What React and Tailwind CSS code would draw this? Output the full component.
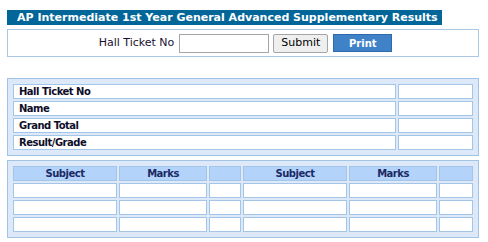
import React from "react";

const font = { fontFamily: '"DejaVu Sans", Verdana, sans-serif' };

function Cell({ children, className = "" }) {
  return (
    <div className={`h-[15px] border border-[#a3c6e8] bg-white ${className}`}>{children}</div>
  );
}

function Head({ children }) {
  return (
    <div className="h-[15px] border border-[#a3c6e8] bg-[#b3d3fb] flex items-center justify-center text-[10px] tracking-[-0.5px] font-bold leading-none text-[#1b2a64]">
      {children}
    </div>
  );
}

export default function App() {
  const labels = ["Hall Ticket No", "Name", "Grand Total", "Result/Grade"];
  return (
    <div className="w-[488px] h-[242px] bg-white" style={font}>
      <div className="ml-[7px] pt-[10px] w-[472px] flex flex-col">
        <div className="w-[435px] h-[15px] bg-[#036699] pl-[10px] flex items-center text-white font-bold text-[11px] leading-none whitespace-nowrap">
          AP Intermediate 1st Year General Advanced Supplementary Results
        </div>
        <div className="mt-[4px] h-[28px] border border-[#a8c8e6] bg-white flex items-center justify-center gap-[4px] pl-[5px]">
          <span className="text-[11px] text-[#1a1030] mr-[1px]">Hall Ticket No</span>
          <div className="w-[90px] h-[19px] border border-[#a5a5a5] bg-white" />
          <div className="w-[55px] h-[19px] border border-[#a5a5a5] bg-[#efefef] rounded-[2px] flex items-center justify-center text-[11px] text-black">
            Submit
          </div>
          <div className="w-[59px] h-[18px] border border-[#2f6bab] bg-[#3f82c8] flex items-center justify-center text-[10px] font-bold text-white ml-[1px]">
            Print
          </div>
        </div>

        <div className="mt-[21px] border border-[#a0c4e6] bg-[#dde9f9] p-[5px] grid grid-cols-[383px_75px] gap-[2px]">
          {labels.map((l) => (
            <React.Fragment key={l}>
              <Cell className="flex items-center pl-[5px] text-[10px] tracking-[-0.5px] font-bold leading-none text-[#0e0e2a]">{l}</Cell>
              <Cell />
            </React.Fragment>
          ))}
        </div>

        <div className="mt-[4px] border border-[#a0c4e6] bg-[#dde9f9] p-[5px] grid grid-cols-[104px_88px_32px_104px_88px_34px] gap-[2px]">
          <Head>Subject</Head>
          <Head>Marks</Head>
          <Head></Head>
          <Head>Subject</Head>
          <Head>Marks</Head>
          <Head></Head>
          {Array.from({ length: 18 }).map((_, i) => (
            <Cell key={i} />
          ))}
        </div>
      </div>
    </div>
  );
}
